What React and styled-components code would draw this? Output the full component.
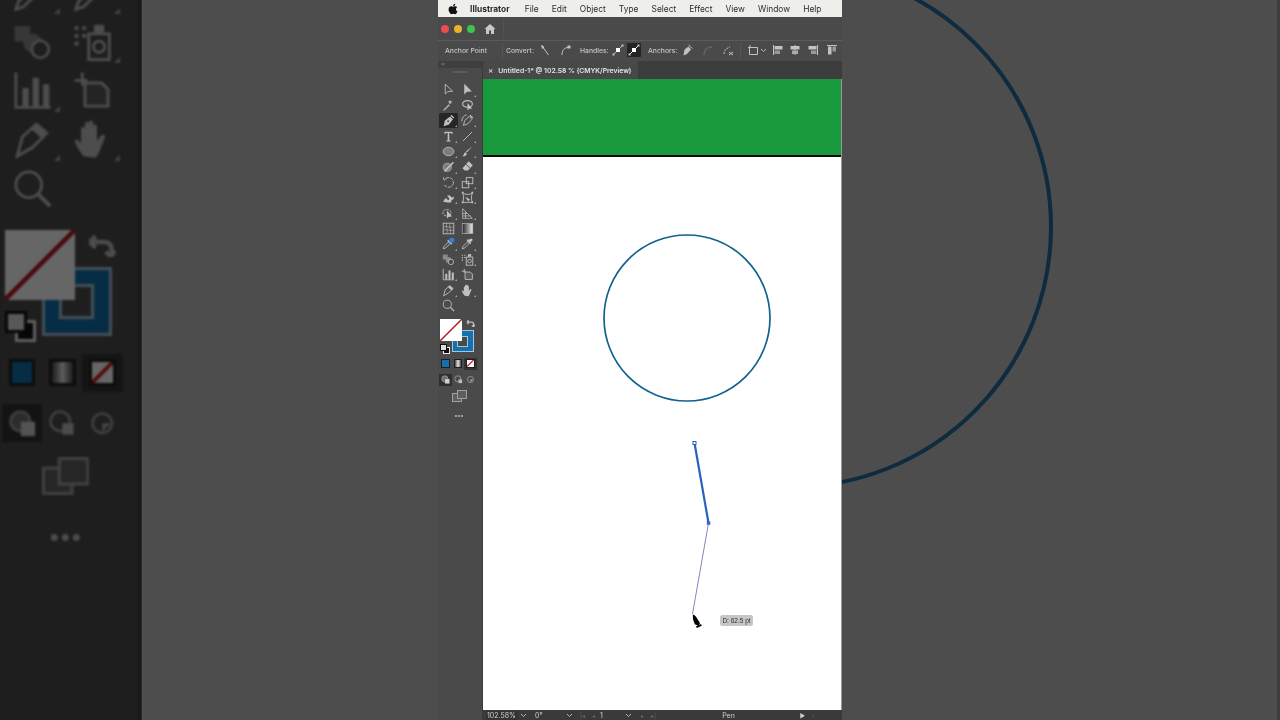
import React from "react";
import styled, { createGlobalStyle } from "styled-components";
import { FaApple } from "react-icons/fa";

const Global = createGlobalStyle`
  html, body { margin: 0; padding: 0; background: #4d4d4d; overflow: hidden; }
  * { box-sizing: border-box; }
`;

const Page = styled.div`
  width: 1280px; height: 720px; display: flex; background: #4d4d4d;
  font-family: Inter, "Liberation Sans", sans-serif; overflow: hidden;
`;
const BackdropPanel = styled.div`
  width: 142px; height: 720px; overflow: hidden; flex: none; background: #1b1b1b;
  border-right: 1px solid #2a2a2a;
`;
const BackdropZoom = styled.div`
  zoom: 3.17; margin-top: -173.2px; margin-left: -0.4px; width: 45px;
  filter: blur(0.3px) brightness(0.4);
`;
const SideGap = styled.div`width: 296px; flex: none;`;
const BackdropRight = styled.div`
  position: relative; flex: 1; height: 720px; overflow: hidden;
  border-right: 3px solid #3d3d3d;
`;
const BackdropArc = styled.svg`position: absolute; left: 0; top: 0; filter: blur(0.5px);`;

const Video = styled.div`
  width: 404px; height: 720px; flex: none; display: flex; flex-direction: column;
  background: #4a4a4a; overflow: hidden; filter: blur(0.35px);
`;
const MenuBar = styled.div`
  height: 17px; background: #eeeeea; display: flex; align-items: center; gap: 13.1px;
  padding-left: 9px; font-size: 8.4px; color: #2c2c2c; flex: none;
`;
const MenuItem = styled.span`
  font-weight: ${p => (p.$bold ? 700 : 400)};
  margin-right: ${p => (p.$bold ? "2px" : 0)};
`;
const AppleMark = styled(FaApple)`width: 12px; height: 12px; color: #111; margin-right: -2px;`;
const TitleBar = styled.div`
  height: 24px; flex: none; display: flex; align-items: center; padding-left: 3px; gap: 5px;
  background: #4a4a4a; border-bottom: 1px solid #5b5b5b;
`;
const Light = styled.i`
  width: 8px; height: 8px; border-radius: 50%; background: ${p => p.$c}; display: block;
`;
const HomeIcon = styled.svg`
  width: 12px; height: 12px; margin-left: 4px; fill: #c8c8c8;
`;
const TitleRule = styled.span`width: 1px; height: 20px; background: #525252; margin-left: 2px;`;
const OptionBar = styled.div`
  height: 20px; flex: none; display: flex; align-items: center; padding: 0 0 2px 7px;
  font-size: 6.8px; font-weight: 500; color: #c4c4c4; background: #4a4a4a; white-space: nowrap;
`;
const AnchorLabel = styled.span`width: 57px; flex: none;`;
const FieldLabel = styled.span`width: ${p => p.$w}px; flex: none; margin-left: ${p => p.$ml}px;`;
const Divider = styled.span`width: 1px; height: 15px; background: #565656; flex: none; margin-left: ${p => p.$ml || 0}px;`;
const OptionBtn = styled.span`
  width: 14px; height: 14px; display: flex; align-items: center; justify-content: center; flex: none;
  border-radius: 1px; background: ${p => (p.$on ? "#242424" : "transparent")};
  opacity: ${p => (p.$dim ? 0.35 : 1)};
  margin-left: ${p => p.$ml || 0}px;
  svg { width: 12px; height: 12px; }
`;
const Workspace = styled.div`flex: 1; display: flex; min-height: 0;`;
const ToolboxShell = styled.div`
  width: 45px; flex: none; background: #4a4a4a; border-right: 1px solid #3a3a3a; position: relative;
  height: 659px; color: #c0c0c0;
`;
const ToolboxHead = styled.div`
  height: 7px; background: #3f3f3f; font-size: 5px; line-height: 6px; color: #aaa; padding-left: 3px;
`;
const Grip = styled.div`
  height: 2px; width: 14px; margin: 3px auto 0; background: #5c5c5c;
`;
const ToolGrid = styled.div`
  margin-top: 9.3px; padding-left: 1.2px; display: grid; grid-template-columns: 19px 19px;
  grid-auto-rows: 15.4px;
`;
const Tool = styled.div`
  position: relative; display: flex; align-items: center; justify-content: center;
  background: ${p => (p.$on ? "#262626" : "transparent")}; border-radius: 1.5px;
  svg { width: 13px; height: 13px; display: block; }
  ${p => p.$corner ? `&::after { content: ""; position: absolute; right: 1px; bottom: 1px; border-style: solid; border-width: 0 0 2px 2px; border-color: transparent transparent #aaa transparent; }` : ""}
`;
const SwatchArea = styled.div`
  position: relative; height: 36px; margin-top: 5px;
`;
const FillSwatch = styled.div`
  position: absolute; left: 2.1px; top: 0.5px; width: 22px; height: 22px; background: #fff;
  z-index: 1; overflow: hidden;
  svg { width: 100%; height: 100%; display: block; }
`;
const StrokeSwatch = styled.div`
  position: absolute; left: 13.6px; top: 12px; width: 22px; height: 22px; background: #1271ae;
  border: 1px solid #a9c6d8; padding: 4.5px;
`;
const StrokeHole = styled.div`width: 100%; height: 100%; background: #4a4a4a; border: 1px solid #a9c6d8;`;
const SwapIcon = styled.svg`
  position: absolute; left: 28px; top: 1px; width: 9px; height: 9px; fill: none; stroke: #bdbdbd; stroke-width: 1.6;
`;
const DefaultIcon = styled.div`
  position: absolute; left: 2px; top: 26px; width: 8px; height: 8px; z-index: 2;
  &::before { content: ""; position: absolute; left: 3px; top: 3px; width: 5px; height: 5px; background: #111; border: 1px solid #eee; }
  &::after { content: ""; position: absolute; left: 0; top: 0; width: 5px; height: 5px; background: #ddd; border: 1px solid #111; }
`;
const ModeRow = styled.div`
  display: grid; grid-template-columns: repeat(3, 12.7px); padding-left: 1px; margin-top: ${p => p.$mt}px;
  justify-content: start;
`;
const ColorCell = styled.div`
  height: 12px; display: flex; align-items: center; justify-content: center;
  background: ${p => (p.$on ? "#333" : "transparent")};
`;
const ColorChip = styled.div`
  width: 8.5px; height: 8.5px; border: 1px solid #1e1e1e;
  background: ${p => (p.$grad ? "linear-gradient(90deg,#444,#e8e8e8,#444)" : p.$bg)};
  overflow: hidden; svg { width: 100%; height: 100%; display: block; }
`;
const DrawCell = styled.div`
  height: 12px; display: flex; align-items: center; justify-content: center;
  background: ${p => (p.$on ? "#2f2f2f" : "transparent")};
  svg { width: 9px; height: 9px; }
`;
const ScreenMode = styled.svg`
  display: block; width: 15px; height: 12px; margin: 4.5px auto 0; transform: translateX(-1px);
  fill: #5f5f5f; stroke: #a0a0a0; stroke-width: 1;
`;
const MoreDots = styled.div`
  display: flex; gap: 1.2px; justify-content: center; margin-top: 12.5px; transform: translateX(-1px);
`;
const Dot = styled.i`width: 2.2px; height: 2.2px; border-radius: 50%; background: #bcbcbc; display: block;`;

const DocArea = styled.div`flex: 1; display: flex; flex-direction: column; min-width: 0;`;
const TabStrip = styled.div`height: 18px; flex: none; background: #3c3c3c; display: flex;`;
const DocTab = styled.div`
  width: 155px; background: #484848; display: flex; align-items: center; padding-left: 5px; gap: 5px;
  font-size: 6.8px; font-weight: 600; color: #e4e4e4; white-space: nowrap;
`;
const TabClose = styled.span`font-size: 8px; font-weight: 500; color: #ddd;`;
const Canvas = styled.div`
  flex: 1; position: relative; background: #fff; border-right: 1px solid #9a9a9a; min-height: 0;
`;
const Band = styled.div`height: 78px; background: #189a3c; border-bottom: 2px solid #0c0c0c;`;
const Drawing = styled.svg`position: absolute; left: 0; top: 0; overflow: visible;`;
const Measure = styled.div`
  position: absolute; left: 237px; top: 536px; width: 33px; height: 11px; border-radius: 2.5px;
  background: #c6c6c6; font-size: 6.5px; line-height: 11px; text-align: center; color: #333;
  font-family: "Liberation Sans", sans-serif;
`;
const StatusBar = styled.div`
  height: 10px; flex: none; background: #3a3a3a; display: flex; align-items: center;
  font-size: 7px; color: #d0d0d0; padding-left: 3px; overflow: hidden;
`;
const Field = styled.span`
  width: ${p => p.$w}px; height: 9px; line-height: 9px; padding-left: ${p => p.$pl ?? 1}px;
  background: ${p => (p.$dark ? "#333" : "transparent")}; flex: none; text-align: ${p => p.$center ? "center" : "left"};
`;
const Chevron = styled.svg`
  width: 7px; height: 5px; fill: none; stroke: #b5b5b5; stroke-width: 1; flex: none;
  margin-right: ${p => p.$mr || 0}px; margin-left: ${p => p.$ml || 0}px;
`;
const Nav = styled.span`
  flex: none; width: ${p => p.$w || 11}px; font-size: 6px; color: ${p => p.$lit ? "#cfcfcf" : "#666"};
  text-align: center; line-height: 9px;
`;

const S = { fill: "none", stroke: "currentColor", strokeWidth: 1.1 };
const F = { fill: "currentColor" };
const Ico = ({ children }) => <svg viewBox="0 0 16 16">{children}</svg>;

const tools = [
  { i: <path d="M4 1.5v12l3.2-3 5.8-.4z" {...S} /> },
  { c: 1, i: <path d="M4 1v13l3.4-3.2 6-.4z" {...F} /> },
  { i: <g><path d="M2 14l7-7" {...S} strokeWidth="1.6" /><path d="M10 1l.7 1.8L12.6 3l-1.5 1.2.5 1.9-1.6-1-1.6 1 .4-1.9L7.4 3l1.9-.2z" {...F} /></g> },
  { i: <g><ellipse cx="8" cy="6" rx="6" ry="4" {...S} strokeWidth="1.4" /><path d="M8 5v9l2.2-2 3.6-.3z" {...F} /></g> },
  { on: 1, c: 1, i: <g><path d="M2 15l1.5-7L10 3l3.5 3.5L8.5 13z" {...F} /><path d="M11 1.5l3.5 3.5" {...S} strokeWidth="1.6" /><circle cx="7.5" cy="8.8" r="1" fill="#262626" /></g> },
  { c: 1, i: <g><path d="M3 14l1.5-6L10 3l3.5 3.5L8.5 12z" {...S} /><path d="M11 1.5l3.5 3.5" {...S} strokeWidth="1.6" /><path d="M1 9c0-4 2-7 6-8" {...S} /></g> },
  { c: 1, i: <path d="M3 2h10v3h-1l-1-1.2H9V12.6l1.6.6v1H5.4v-1l1.6-.6V3.8H5L4 5H3z" {...F} /> },
  { c: 1, i: <path d="M2.5 13.5l11-11" {...S} /> },
  { c: 1, i: <ellipse cx="8" cy="8" rx="6.6" ry="5.2" fill="#7d7d7d" stroke="currentColor" strokeWidth="1" /> },
  { c: 1, i: <g><path d="M14 1.5L7.5 9l-1.5-1z" {...F} /><path d="M5.5 9c-2 .5-1.5 3-3.5 5 3 0 5.2-1 5.2-3.6z" {...F} /></g> },
  { c: 1, i: <g><circle cx="6.5" cy="9" r="5" fill="#7d7d7d" stroke="currentColor" strokeWidth=".8" /><path d="M3 14L14 3" {...S} strokeWidth="2" /></g> },
  { c: 1, i: <g><path d="M9.5 1.5l5 5-6 6.5H4.5L1.8 10.2z" {...F} /><path d="M6 5l5 5" stroke="#4a4a4a" strokeWidth="1.1" /></g> },
  { c: 1, i: <path d="M4 3.5A6 6 0 1 1 3 11M2 1.5l.3 3.4 3.4-.4" {...S} strokeDasharray="5 1.2" /> },
  { c: 1, i: <g><rect x="1.5" y="7" width="8" height="7.5" {...S} /><rect x="6.5" y="2" width="8" height="7.5" {...S} /></g> },
  { c: 1, i: <path d="M1 13c2-1 2-4 4-4s1 3 3 2 0-4-2-5c3-2 5 0 6 2l3-1-1 3-2 1-1 3H6z" {...F} /> },
  { c: 1, i: <g><path d="M2 2l3 2h6l3-2-1 4v5l1 3H2l1-3V6z" {...S} /><path d="M1 1h2v2H1zM13 1h2v2h-2zM1 13h2v2H1zM13 13h2v2h-2z" {...F} /><path d="M5 7l4 6 2-3z" {...F} /></g> },
  { c: 1, i: <g><ellipse cx="6" cy="7" rx="5" ry="4" {...S} strokeDasharray="3 1" /><path d="M6 4v10l2.4-2 4-.2z" {...F} /></g> },
  { c: 1, i: <g><path d="M2 2v12h12M2 2l12 12M2 8h6M5.5 5.5V14M2 11h10" {...S} strokeWidth=".9" /></g> },
  { i: <g><rect x="1.5" y="1.5" width="13" height="13" {...S} /><path d="M2 6c4-2 8 2 12 0M2 10c4-2 8 2 12 0M6 2c-2 4 2 8 0 12M10 2c-2 4 2 8 0 12" {...S} strokeWidth=".7" /></g> },
  { i: <rect x="1.5" y="2" width="13" height="12" fill="url(#toolGrad)" stroke="#bbb" strokeWidth=".8" /> },
  { c: 1, i: <g><path d="M1.5 14.5l1-3L8 6l2 2-5.5 5.5z" {...S} /><path d="M7 4l5 5" stroke="currentColor" strokeWidth="1.6" /><circle cx="12" cy="4" r="3.2" fill="#2f7fe0" /></g> },
  { c: 1, i: <g><path d="M1.5 14.5l1-3L8 6l2 2-5.5 5.5z" {...S} /><path d="M7 4.5l4.5 4.5 1-1-1-1.3 2.6-2.5c1-1-1.3-3-2.3-2L9.3 3.5 8 2.5z" {...F} /></g> },
  { i: <g><rect x="1" y="2" width="6" height="6" fill="#8a8a8a" /><circle cx="8" cy="8.5" r="3.6" fill="#8a8a8a" /><circle cx="11" cy="11" r="3.3" fill="#4a4a4a" stroke="currentColor" strokeWidth="1" /></g> },
  { c: 1, i: <g><rect x="6.5" y="5" width="8" height="10" {...S} /><circle cx="10.5" cy="10" r="2.2" {...S} /><rect x="8.5" y="1.5" width="4" height="3" {...F} /><path d="M1 2h1.500v1.500H1zM4 2h1.500v1.500H4zM1 5h1.500v1.500H1zM4 5h1.500v1.500H4zM1 8h1.500v1.500H1z" {...F} /></g> },
  { c: 1, i: <g><path d="M1.5 1v13.5H15" {...S} /><path d="M4 7h2.500v7H4zM8 3h2.500v11H8zM12 5.500h2.500V14H12z" {...F} /></g> },
  { i: <g><path d="M5 5h6.500L14 7.500V14H5z" {...S} fill="#5b5b5b" /><path d="M1 4h5M4 1v5" {...S} /></g> },
  { c: 1, i: <g><path d="M2 14.500l2-7.500 5.500-5 4 3.500L8 11z" {...S} /><path d="M7.500 4L12 8l1.800-2.500-4-3.500z" {...F} /></g> },
  { c: 1, i: <path d="M4.500 14.500C3 12.500 1.500 10 1 8.500c.6-.9 1.600-.4 2.500 1V4c0-1.300 1.500-1.300 1.500 0v3-5c0-1.300 1.600-1.300 1.600 0v5-5.500c0-1.300 1.600-1.300 1.600 0V7 3c0-1.300 1.500-1.300 1.500 0v5.500l1.500-2c.9-1 2-.3 1.500.9l-2 5c-.5 1.300-1 2.600-2 2.600z" {...F} /> },
  { i: <g><circle cx="6.5" cy="6.5" r="5" {...S} /><path d="M10.300 10.300l4.500 4.500" {...S} strokeWidth="1.500" /></g> },
];

const Toolbox = ({ backdrop }) => (
  <ToolboxShell>
    {!backdrop && <ToolboxHead>‹‹</ToolboxHead>}
    {!backdrop && <Grip />}
    <svg width="0" height="0" style={{ position: "absolute" }}>
      <defs>
        <linearGradient id="toolGrad"><stop offset="0" stopColor="#222" /><stop offset="1" stopColor="#eee" /></linearGradient>
      </defs>
    </svg>
    <ToolGrid>
      {tools.map((t, n) => (
        <Tool key={n} $on={t.on} $corner={t.c}><Ico>{t.i}</Ico></Tool>
      ))}
    </ToolGrid>
    <SwatchArea>
      <FillSwatch>
        <svg viewBox="0 0 20 20" preserveAspectRatio="none"><path d="M0 20L20 0" stroke="#b5141c" strokeWidth="1.3" /></svg>
      </FillSwatch>
      <StrokeSwatch><StrokeHole /></StrokeSwatch>
      <SwapIcon viewBox="0 0 10 10"><path d="M1 3.5h5c2 0 3 1.500 2.500 4M1 3.500L3 1.500M1 3.500l2 2M8.500 8.500l-2-1.500M8.500 8.500l1.300-2" /></SwapIcon>
      <DefaultIcon />
    </SwatchArea>
    <ModeRow $mt={3.5}>
      <ColorCell><ColorChip $bg="#1271ae" /></ColorCell>
      <ColorCell><ColorChip $grad /></ColorCell>
      <ColorCell $on><ColorChip $bg="#fff"><svg viewBox="0 0 10 10"><path d="M0 10L10 0" stroke="#c8161d" strokeWidth="1.800" /></svg></ColorChip></ColorCell>
    </ModeRow>
    <ModeRow $mt={4}>
      <DrawCell $on><svg viewBox="0 0 10 10"><circle cx="4.300" cy="4.300" r="3.400" fill="#6d6d6d" stroke="#999" /><rect x="4.500" y="4.500" width="5" height="5" fill="#d0d0d0" /></svg></DrawCell>
      <DrawCell><svg viewBox="0 0 10 10"><circle cx="4.300" cy="4.300" r="3.400" fill="none" stroke="#999" /><rect x="5" y="5" width="4" height="4" fill="#bbb" /></svg></DrawCell>
      <DrawCell><svg viewBox="0 0 10 10"><circle cx="5" cy="5" r="3.400" fill="none" stroke="#999" /><path d="M5 5h3l-3 3z" fill="#aaa" /></svg></DrawCell>
    </ModeRow>
    <ScreenMode viewBox="0 0 15 12">
      <rect x=".5" y="3.500" width="9" height="8" />
      <rect x="5.500" y=".5" width="9" height="8" />
    </ScreenMode>
    <MoreDots><Dot /><Dot /><Dot /></MoreDots>
  </ToolboxShell>
);

const I = (p) => <svg viewBox="0 0 12 12" fill="#c2c2c2" stroke="none" {...p} />;
const Handle = ({ box }) => (
  <I><path d="M1.500 10.500l9-9" stroke={box ? "#eee" : "#bbb"} strokeWidth="1" /><rect x="4" y="4" width="4" height="4" fill="#fff" /><rect x=".5" y="9.500" width="2" height="2" /><rect x="9.500" y=".5" width="2" height="2" /></I>
);
const Chev = (p) => <Chevron viewBox="0 0 7 5" {...p}><path d="M1 1l2.500 2.500L6 1" /></Chevron>;

export default function App() {
  return (
    <Page>
      <Global />
      <BackdropPanel>
        <BackdropZoom><Toolbox backdrop /></BackdropZoom>
      </BackdropPanel>
      <SideGap />
      <Video>
        <MenuBar>
          <AppleMark />
          <MenuItem $bold>Illustrator</MenuItem>
          {["File", "Edit", "Object", "Type", "Select", "Effect", "View", "Window", "Help"].map(m => <MenuItem key={m}>{m}</MenuItem>)}
        </MenuBar>
        <TitleBar>
          <Light $c="#ee4d4d" /><Light $c="#e9b32c" /><Light $c="#3fc24e" />
          <HomeIcon viewBox="0 0 12 12"><path d="M6 1L.5 6H2v5h3V7.500h2V11h3V6h1.500z" /></HomeIcon>
          <TitleRule />
        </TitleBar>
        <OptionBar>
          <AnchorLabel>Anchor Point</AnchorLabel>
          <Divider />
          <FieldLabel $w={26} $ml={3}>Convert:</FieldLabel>
          <OptionBtn $ml={6}><I><path d="M2.500 1.500l2.500 1.500-1.500 1.500zM4.500 4l5 7" stroke="#c2c2c2" /></I></OptionBtn>
          <OptionBtn $ml={6}><I><path d="M3 11c0-5 2-7 7-8" fill="none" stroke="#c2c2c2" /><rect x="8.500" y="1.500" width="3" height="3" /></I></OptionBtn>
          <FieldLabel $w={26} $ml={8}>Handles:</FieldLabel>
          <OptionBtn $ml={5}><Handle /></OptionBtn>
          <OptionBtn $on $ml={2}><Handle box /></OptionBtn>
          <FieldLabel $w={27} $ml={7}>Anchors:</FieldLabel>
          <OptionBtn $ml={5}><I><path d="M2.500 11.500l1-6 4-3 2.500 3-4 4.500z" /><path d="M7.500 .8l3.700 3.700" stroke="#c2c2c2" /></I></OptionBtn>
          <OptionBtn $dim $ml={7}><I><path d="M2 11c0-5 3-8 8-8" fill="none" stroke="#c2c2c2" /></I></OptionBtn>
          <OptionBtn $ml={6}><I><path d="M2 10c0-4 3-6 6-7" fill="none" stroke="#c2c2c2" strokeDasharray="2 1" /><path d="M7 8l4 3M11 8l-4 3" stroke="#c2c2c2" /></I></OptionBtn>
          <Divider $ml={5} />
          <OptionBtn $ml={5}><I><path d="M2.500 3.500h8v7h-8zM1 3.500h3M3 1v3" fill="none" stroke="#c2c2c2" /></I></OptionBtn>
          <Chev />
          <OptionBtn $ml={4}><I><path d="M1.500 1v10" stroke="#c2c2c2" /><rect x="2.500" y="2" width="8" height="3.500" /><rect x="2.500" y="6.500" width="5.500" height="3.500" fill="#999" /></I></OptionBtn>
          <OptionBtn $ml={3}><I><path d="M6 1v10" stroke="#c2c2c2" /><rect x="1.500" y="2" width="9" height="3.500" /><rect x="3" y="6.500" width="6" height="3.500" fill="#aaa" /></I></OptionBtn>
          <OptionBtn $ml={4}><I><path d="M10.500 1v10" stroke="#c2c2c2" /><rect x="1.500" y="2" width="8" height="3.500" /><rect x="4" y="6.500" width="5.500" height="3.500" fill="#999" /></I></OptionBtn>
          <OptionBtn $ml={5}><I><path d="M1 1.500h10" stroke="#c2c2c2" /><rect x="2" y="2.500" width="3.500" height="8" /><rect x="6.500" y="2.500" width="3.500" height="5" fill="#999" /></I></OptionBtn>
        </OptionBar>
        <Workspace>
          <Toolbox />
          <DocArea>
            <TabStrip>
              <DocTab><TabClose>×</TabClose>Untitled-1* @ 102.58 % (CMYK/Preview)</DocTab>
            </TabStrip>
            <Canvas>
              <Band />
              <Drawing width="359" height="631" viewBox="483 79 359 631">
                <circle cx="687" cy="318" r="83" fill="none" stroke="#11628f" strokeWidth="1.700" />
                <path d="M694.500 443L708.500 523" stroke="#2763bd" strokeWidth="2.200" />
                <path d="M708.500 523L692.500 614" stroke="#8288c4" strokeWidth="1" />
                <rect x="693" y="441.500" width="3" height="3" fill="#fff" stroke="#2763bd" strokeWidth="1" />
                <rect x="706.800" y="521.300" width="3.500" height="3.500" fill="#3a64d4" />
                <path d="M692.800 614.500c1.800.5 3.600 2.200 4.300 4l2.900 4.500-1.500 2.800-3.700-1.600-1.800-5z" fill="#000" />
                <path d="M696 626.300l5-2.300 .8 1.800-5 2.300z" fill="#000" />
              </Drawing>
              <Measure>D: 62.5 pt</Measure>
            </Canvas>
            <StatusBar>
              <Field $w={32} $dark>102.58%</Field>
              <Chev $ml={2} $mr={8} />
              <Field $w={31} $pl={0}>0°</Field>
              <Chev $mr={4} />
              <Nav>|◂</Nav><Nav>◂</Nav>
              <Field $w={26} $pl={1}>1</Field>
              <Chev $mr={5} />
              <Nav>▸</Nav><Nav>▸|</Nav>
              <Field $w={138} $center>Pen</Field>
              <Nav $lit>▶</Nav><Nav>‹</Nav>
            </StatusBar>
          </DocArea>
        </Workspace>
      </Video>
      <BackdropRight>
        <BackdropArc width="438" height="720" viewBox="842 0 438 720">
          <circle cx="791" cy="227" r="260" fill="none" stroke="#0e2b3f" strokeWidth="4" />
        </BackdropArc>
      </BackdropRight>
    </Page>
  );
}
